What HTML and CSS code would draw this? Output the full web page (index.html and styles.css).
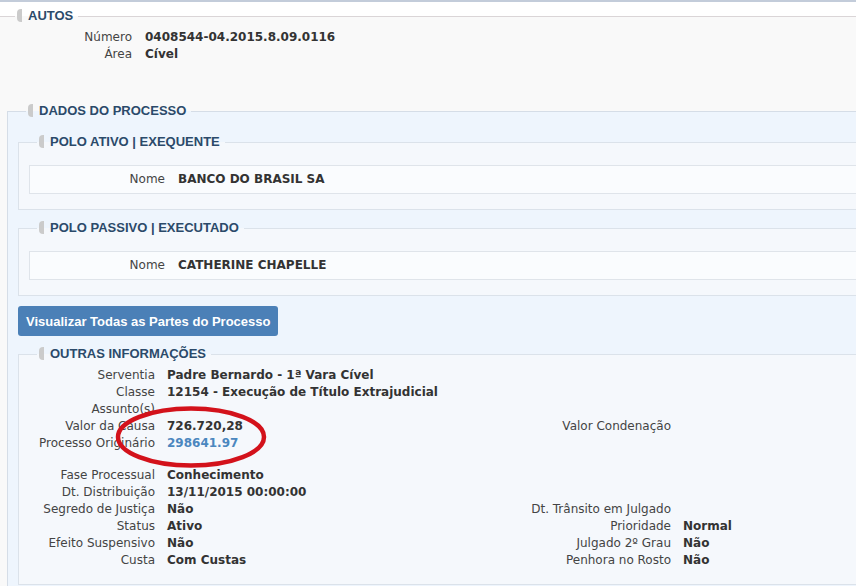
FILE: index.html
```html
<!DOCTYPE html>
<html lang="pt-BR">
<head>
<meta charset="utf-8">
<title>Processo</title>
<link rel="stylesheet" href="styles.css">
</head>
<body>
<div class="page">
  <div class="topbar"></div>
  <fieldset class="fs fs-autos">
    <legend class="lg">AUTOS</legend>
    <div class="kv kv-autos">
      <span class="k">Número</span><span class="v">0408544-04.2015.8.09.0116</span>
      <span class="k">Área</span><span class="v">Cível</span>
    </div>

    <fieldset class="fs fs-dados">
      <legend class="lg">DADOS DO PROCESSO</legend>

      <fieldset class="fs fs-polo">
        <legend class="lg">POLO ATIVO | EXEQUENTE</legend>
        <div class="party"><span class="k">Nome</span><span class="v">BANCO DO BRASIL SA</span></div>
      </fieldset>

      <fieldset class="fs fs-polo fs-next">
        <legend class="lg">POLO PASSIVO | EXECUTADO</legend>
        <div class="party"><span class="k">Nome</span><span class="v">CATHERINE CHAPELLE</span></div>
      </fieldset>

      <button class="btn" type="button">Visualizar Todas as Partes do Processo</button>

      <fieldset class="fs fs-polo fs-outras">
        <legend class="lg">OUTRAS INFORMAÇÕES</legend>
        <div class="info">
          <span class="k">Serventia</span><span class="v">Padre Bernardo - 1ª Vara Cível</span><span class="k"></span><span class="v"></span>
          <span class="k">Classe</span><span class="v">12154 - Execução de Título Extrajudicial</span><span class="k"></span><span class="v"></span>
          <span class="k">Assunto(s)</span><span class="v"></span><span class="k"></span><span class="v"></span>
          <span class="k">Valor da Causa</span><span class="v">726.720,28</span><span class="k">Valor Condenação</span><span class="v"></span>
          <span class="k">Processo Originário</span><span class="v"><a class="link" href="#">298641.97</a></span><span class="k"></span><span class="v"></span>
          <div class="spacer"></div>
          <span class="k">Fase Processual</span><span class="v">Conhecimento</span><span class="k"></span><span class="v"></span>
          <span class="k">Dt. Distribuição</span><span class="v">13/11/2015 00:00:00</span><span class="k"></span><span class="v"></span>
          <span class="k">Segredo de Justiça</span><span class="v">Não</span><span class="k">Dt. Trânsito em Julgado</span><span class="v"></span>
          <span class="k">Status</span><span class="v">Ativo</span><span class="k">Prioridade</span><span class="v">Normal</span>
          <span class="k">Efeito Suspensivo</span><span class="v">Não</span><span class="k">Julgado 2º Grau</span><span class="v">Não</span>
          <span class="k">Custa</span><span class="v">Com Custas</span><span class="k">Penhora no Rosto</span><span class="v">Não</span>
        </div>
      </fieldset>
    </fieldset>
  </fieldset>

  <svg class="mark" width="170" height="74" viewBox="0 0 170 74" aria-hidden="true">
    <ellipse cx="81" cy="35" rx="73" ry="28.5" fill="none" stroke="#d3121b" stroke-width="4.5"/>
  </svg>
</div>
</body>
</html>
```

FILE: styles.css
```css
html, body {
  margin: 0;
  padding: 0;
  background: #ffffff;
  overflow: hidden;
}

body {
  font-family: "DejaVu Sans", Verdana, sans-serif;
  font-size: 12px;
  color: #444444;
}

.page {
  position: relative;
  width: 100%;
}

.topbar {
  height: 2px;
  background: #c3ccda;
}

.fs {
  margin: 0;
  padding: 0 0 0 10px;
  min-width: 0;
  border: 1px solid #dbe2ea;
  border-right: none;
}

.lg {
  font-family: "Liberation Sans", Arial, sans-serif;
  font-weight: bold;
  font-size: 13px;
  line-height: 16px;
  color: #2b4a6a;
  padding: 0 5px 0 2px;
  margin-left: 8px;
}

.lg::before {
  content: "";
  display: inline-block;
  width: 5px;
  height: 13px;
  margin-right: 6px;
  vertical-align: -2px;
  background: #cbcbcb;
  border-radius: 4px 0 0 4px;
}

.k {
  text-align: right;
  white-space: nowrap;
}

.v {
  font-weight: bold;
  color: #333333;
  white-space: nowrap;
}

/* AUTOS */
.fs-autos {
  margin-top: 6px;
  padding: 0;
  border: none;
  border-top: 1px solid #dad5d7;
  background: #f9f9f9;
}

.fs-autos > .lg {
  margin-left: 15px;
}

.kv-autos {
  display: grid;
  grid-template-columns: 132px 1fr;
  column-gap: 13px;
  line-height: 17px;
  padding-top: 5px;
}

/* DADOS DO PROCESSO */
.fs-dados {
  margin: 40px 0 0 7px;
  padding: 15px 0 12px 10px;
  background: #eef5fd;
  border-color: #d5dde7;
  border-right: none;
}

.fs-polo {
  padding: 15px 0 15px 10px;
  background: #f5f8fc;
  border-color: #dbe2ea;
  border-right: none;
}

.fs-next {
  margin-top: 10px;
}

.party {
  display: grid;
  grid-template-columns: 135px 1fr;
  column-gap: 13px;
  line-height: 17px;
  padding: 5px 0;
  background: #fafcfe;
  border: 1px solid #dfe4ea;
  border-right: none;
}

.btn {
  display: block;
  margin-top: 10px;
  height: 30px;
  padding: 0 8px;
  border: none;
  border-radius: 3px;
  background: #4b80b7;
  color: #ffffff;
  font-family: "Liberation Sans", Arial, sans-serif;
  font-weight: bold;
  font-size: 13px;
}

/* OUTRAS INFORMAÇÕES */
.fs-outras {
  margin-top: 10px;
  padding: 5px 0 15px 10px;
}

.info {
  display: grid;
  grid-template-columns: 126px 342px 150px 1fr;
  column-gap: 12px;
  line-height: 17px;
}

.info .v:nth-child(4n) {
  padding-left: 1px;
}

.spacer {
  grid-column: 1 / -1;
  height: 15px;
}

.link {
  color: #4b87bf;
  text-decoration: none;
}

.mark {
  position: absolute;
  left: 110px;
  top: 402px;
}
```
